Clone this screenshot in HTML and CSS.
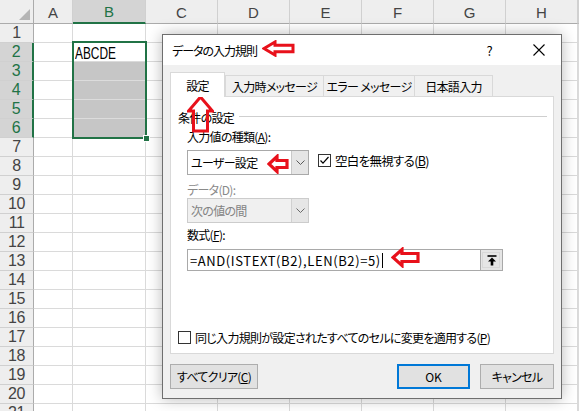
FILE: index.html
```html
<!DOCTYPE html>
<html lang="ja">
<head>
<meta charset="utf-8">
<link rel="stylesheet" href="styles.css">
</head>
<body>
<div class="app">
  <div class="sheet">
    <div class="corner"><span class="tri"></span></div>
    <div class="ch">A</div><div class="ch sel">B</div><div class="ch">C</div><div class="ch">D</div><div class="ch">E</div><div class="ch">F</div><div class="ch">G</div><div class="ch">H</div><div class="ch"></div>

    <div class="rh">1</div><div class="c"></div><div class="c"></div><div class="c"></div><div class="c"></div><div class="c"></div><div class="c"></div><div class="c"></div><div class="c"></div><div class="c"></div>
    <div class="rh sel">2</div><div class="c"></div><div class="c txt"><span>ABCDE</span></div><div class="c"></div><div class="c"></div><div class="c"></div><div class="c"></div><div class="c"></div><div class="c"></div><div class="c"></div>
    <div class="rh sel">3</div><div class="c"></div><div class="c gray"></div><div class="c"></div><div class="c"></div><div class="c"></div><div class="c"></div><div class="c"></div><div class="c"></div><div class="c"></div>
    <div class="rh sel">4</div><div class="c"></div><div class="c gray"></div><div class="c"></div><div class="c"></div><div class="c"></div><div class="c"></div><div class="c"></div><div class="c"></div><div class="c"></div>
    <div class="rh sel">5</div><div class="c"></div><div class="c gray"></div><div class="c"></div><div class="c"></div><div class="c"></div><div class="c"></div><div class="c"></div><div class="c"></div><div class="c"></div>
    <div class="rh sel">6</div><div class="c"></div><div class="c gray"></div><div class="c"></div><div class="c"></div><div class="c"></div><div class="c"></div><div class="c"></div><div class="c"></div><div class="c"></div>
    <div class="rh">7</div><div class="c"></div><div class="c"></div><div class="c"></div><div class="c"></div><div class="c"></div><div class="c"></div><div class="c"></div><div class="c"></div><div class="c"></div>
    <div class="rh">8</div><div class="c"></div><div class="c"></div><div class="c"></div><div class="c"></div><div class="c"></div><div class="c"></div><div class="c"></div><div class="c"></div><div class="c"></div>
    <div class="rh">9</div><div class="c"></div><div class="c"></div><div class="c"></div><div class="c"></div><div class="c"></div><div class="c"></div><div class="c"></div><div class="c"></div><div class="c"></div>
    <div class="rh">10</div><div class="c"></div><div class="c"></div><div class="c"></div><div class="c"></div><div class="c"></div><div class="c"></div><div class="c"></div><div class="c"></div><div class="c"></div>
    <div class="rh">11</div><div class="c"></div><div class="c"></div><div class="c"></div><div class="c"></div><div class="c"></div><div class="c"></div><div class="c"></div><div class="c"></div><div class="c"></div>
    <div class="rh">12</div><div class="c"></div><div class="c"></div><div class="c"></div><div class="c"></div><div class="c"></div><div class="c"></div><div class="c"></div><div class="c"></div><div class="c"></div>
    <div class="rh">13</div><div class="c"></div><div class="c"></div><div class="c"></div><div class="c"></div><div class="c"></div><div class="c"></div><div class="c"></div><div class="c"></div><div class="c"></div>
    <div class="rh">14</div><div class="c"></div><div class="c"></div><div class="c"></div><div class="c"></div><div class="c"></div><div class="c"></div><div class="c"></div><div class="c"></div><div class="c"></div>
    <div class="rh">15</div><div class="c"></div><div class="c"></div><div class="c"></div><div class="c"></div><div class="c"></div><div class="c"></div><div class="c"></div><div class="c"></div><div class="c"></div>
    <div class="rh">16</div><div class="c"></div><div class="c"></div><div class="c"></div><div class="c"></div><div class="c"></div><div class="c"></div><div class="c"></div><div class="c"></div><div class="c"></div>
    <div class="rh">17</div><div class="c"></div><div class="c"></div><div class="c"></div><div class="c"></div><div class="c"></div><div class="c"></div><div class="c"></div><div class="c"></div><div class="c"></div>
    <div class="rh">18</div><div class="c"></div><div class="c"></div><div class="c"></div><div class="c"></div><div class="c"></div><div class="c"></div><div class="c"></div><div class="c"></div><div class="c"></div>
    <div class="rh">19</div><div class="c"></div><div class="c"></div><div class="c"></div><div class="c"></div><div class="c"></div><div class="c"></div><div class="c"></div><div class="c"></div><div class="c"></div>
    <div class="rh">20</div><div class="c"></div><div class="c"></div><div class="c"></div><div class="c"></div><div class="c"></div><div class="c"></div><div class="c"></div><div class="c"></div><div class="c"></div>
    <div class="rh">21</div><div class="c"></div><div class="c"></div><div class="c"></div><div class="c"></div><div class="c"></div><div class="c"></div><div class="c"></div><div class="c"></div><div class="c"></div>
  </div>

  <div class="selbox"><span class="handle"></span></div>

  <div class="dialog">
    <div class="titlebar">
      <span class="title">データの入力規則</span>
      <span class="help">?</span>
      <svg class="close" width="12" height="12" viewBox="0 0 12 12"><path d="M0.5 0.5L11.5 11.5M11.5 0.5L0.5 11.5" stroke="#000" stroke-width="1.1" fill="none"/></svg>
    </div>
    <div class="dbody">
      <div class="tabs">
        <div class="tab active">設定</div>
        <div class="tab t2">入力時メッセージ</div>
        <div class="tab t3">エラー メッセージ</div>
        <div class="tab t4">日本語入力</div>
      </div>
      <div class="panel">
        <div class="group"><span>条件の設定</span><i class="gline"></i></div>
        <div class="inner">
          <div class="lbl l1">入力値の種類(<u>A</u>):</div>
          <div class="row1">
            <div class="combo"><span class="val">ユーザー設定</span><span class="dd"><svg width="9" height="5" viewBox="0 0 9 5"><path d="M0.5 0.5L4.5 4.5L8.5 0.5" stroke="#5a5a5a" fill="none"/></svg></span></div>
            <div class="chk c1"><span class="box"><svg width="11" height="11" viewBox="0 0 11 11"><path d="M1.5 5.5L4 8.2L9.5 2" stroke="#000" stroke-width="1.2" fill="none"/></svg></span><span>空白を無視する(<u>B</u>)</span></div>
          </div>
          <div class="lbl dis l2">データ(D):</div>
          <div class="combo disabled"><span class="val">次の値の間</span><span class="dd"><svg width="9" height="5" viewBox="0 0 9 5"><path d="M0.5 0.5L4.5 4.5L8.5 0.5" stroke="#6a6a6a" fill="none"/></svg></span></div>
          <div class="lbl l3">数式(<u>F</u>):</div>
          <div class="formula"><span class="ftext">=AND(ISTEXT(B2),LEN(B2)=5)</span><i class="caret"></i><span class="fbtn"><svg width="10" height="11" viewBox="0 0 10 11"><path d="M0.5 1H9.5" stroke="#000" stroke-width="1.6"/><path d="M5 2.5L9 6.5H6.3V10.5H3.7V6.5H1Z" fill="#000"/></svg></span></div>
        </div>
        <div class="chk apply"><span class="box"></span><span>同じ入力規則が設定されたすべてのセルに変更を適用する(<u>P</u>)</span></div>
      </div>
      <div class="buttons">
        <div class="btn clear">すべてクリア(<u>C</u>)</div>
        <div class="btn ok">OK</div>
        <div class="btn cancel">キャンセル</div>
      </div>
    </div>
  </div>

  <svg class="arrow a-title" width="33" height="17" viewBox="0 0 33 17"><path d="M2 8.5L13 2V5.2H31V11.8H13V15Z" fill="none" stroke="#e8111b" stroke-width="3" stroke-linejoin="miter"/></svg>
  <svg class="arrow a-tab" width="27" height="38" viewBox="0 0 27 38"><path d="M13.5 2L25.5 16H20.5V36H6.5V16H1.5Z" fill="none" stroke="#e8111b" stroke-width="3" stroke-linejoin="miter"/></svg>
  <svg class="arrow a-combo" width="22" height="20" viewBox="0 0 22 20"><path d="M2 10L10 2.5V6.5H20V13.5H10V17.5Z" fill="none" stroke="#e8111b" stroke-width="3.2" stroke-linejoin="miter"/></svg>
  <svg class="arrow a-formula" width="29" height="21" viewBox="0 0 29 21"><path d="M2 10.5L11 2.5V6.5H27V14.5H11V18.5Z" fill="none" stroke="#e8111b" stroke-width="3.2" stroke-linejoin="miter"/></svg>
</div>
</body>
</html>
```

FILE: styles.css
```css
* { box-sizing: border-box; }
body { margin: 0; background: #fff; overflow: hidden; }
.app {
  position: relative;
  width: 579px;
  height: 411px;
  overflow: hidden;
  font-family: "Noto Sans CJK JP", sans-serif;
  font-feature-settings: "palt" 1;
}

/* ---------- spreadsheet ---------- */
.sheet {
  display: grid;
  grid-template-columns: 34px 39px 73px repeat(6, 72px) 1fr;
  grid-template-rows: 24px;
  grid-auto-rows: 19px;
  font-family: "Liberation Sans", sans-serif;
  color: #444;
}
.corner {
  position: relative;
  background: #eeeeee;
  border-right: 1px solid #ababab;
  border-bottom: 1px solid #ababab;
}
.tri {
  position: absolute;
  right: 3px;
  bottom: 3px;
  width: 0;
  height: 0;
  border-left: 11px solid transparent;
  border-bottom: 11px solid #b5b5b5;
}
.ch {
  background: #eeeeee;
  border-right: 1px solid #d0d0d0;
  border-bottom: 1px solid #ababab;
  display: flex;
  align-items: center;
  justify-content: center;
  font-size: 15px;
  padding-top: 1px;
}
.ch.sel {
  background: #d4d4d4;
  color: #217346;
  border-bottom: 2px solid #217346;
}
.rh {
  background: #eeeeee;
  border-right: 1px solid #ababab;
  border-bottom: 1px solid #d0d0d0;
  display: flex;
  align-items: center;
  justify-content: center;
  font-size: 16px;
  letter-spacing: -0.5px;
}
.rh.sel {
  background: #d4d4d4;
  color: #217346;
  border-right: 2px solid #217346;
}
.c {
  border-right: 1px solid #dadada;
  border-bottom: 1px solid #dadada;
}
.c.gray { background: #c6c6c6; border-color: #dcdcdc; }
.c.txt {
  font-size: 17px;
  line-height: 18px;
  color: #000;
  padding: 2px 0 0 2px;
  white-space: nowrap;
}
.c.txt span {
  display: inline-block;
  transform: scaleX(0.7);
  transform-origin: left center;
}

.selbox {
  position: absolute;
  left: 72px;
  top: 41px;
  width: 75px;
  height: 98px;
  border: 2px solid #217346;
}
.handle {
  position: absolute;
  right: -5px;
  bottom: -5px;
  width: 7px;
  height: 7px;
  background: #217346;
  border: 1px solid #fff;
}

/* ---------- dialog ---------- */
.dialog {
  position: absolute;
  left: 162px;
  top: 34px;
  width: 400px;
  height: 365px;
  background: #f0f0f0;
  border: 1px solid #6e6e6e;
  box-shadow: 0 0 14px rgba(0, 0, 0, 0.28);
  font-size: 12px;
  letter-spacing: -0.7px;
  color: #000;
  display: flex;
  flex-direction: column;
  white-space: nowrap;
}
.titlebar {
  height: 30px;
  background: #fff;
  display: flex;
  align-items: center;
  padding-left: 9px;
}
.title { font-size: 12px; flex: 1; letter-spacing: -1px; }
.help { font-size: 13px; margin-right: 41px; }
.close { margin-right: 16px; }

.dbody {
  padding: 7px 7px 0 7px;
  display: flex;
  flex-direction: column;
}
.tabs {
  display: flex;
  align-items: flex-end;
  height: 24px;
  position: relative;
  z-index: 1;
}
.tab {
  height: 21px;
  border: 1px solid #d9d9d9;
  border-bottom: none;
  background: #f0f0f0;
  display: flex;
  align-items: center;
  justify-content: center;
  margin-left: -1px;
  padding-top: 1px;
}
.tab.active {
  height: 25px;
  margin-left: 0;
  margin-bottom: -1px;
  width: 55px;
  background: #fff;
  padding-top: 0;
}
.tab.t2 { width: 99px; margin-left: 0; }
.tab.t3 { width: 92px; }
.tab.t4 { width: 79px; }

.panel {
  width: 384px;
  height: 258px;
  background: #fff;
  border: 1px solid #d9d9d9;
  padding: 12px 0 0 7px;
  display: flex;
  flex-direction: column;
}
.group {
  display: flex;
  align-items: center;
  height: 16px;
  padding-right: 6px;
}
.gline {
  display: block;
  flex: 1;
  height: 1px;
  background: #cfcfcf;
  margin-left: 5px;
  margin-top: -1px;
}
.inner {
  padding-left: 9px;
  display: flex;
  flex-direction: column;
}
.lbl { height: 16px; line-height: 16px; }
.l1 { margin-top: 4px; }
.l2 { margin-top: 7px; }
.l3 { margin-top: 4px; }
.dis { color: #8a8a8a; }
.row1 {
  display: flex;
  align-items: flex-start;
  margin-top: 5px;
}
.combo {
  width: 122px;
  height: 25px;
  border: 1px solid #a9a9a9;
  background: #fff;
  display: flex;
  align-items: stretch;
}
.combo .val {
  flex: 1;
  display: flex;
  align-items: center;
  padding-left: 3px;
  font-size: 12px;
}
.combo .dd {
  width: 17px;
  background: #e5e5e5;
  border-left: 1px solid #c8c8c8;
  display: flex;
  align-items: center;
  justify-content: center;
}
.combo.disabled {
  background: #f0f0f0;
  border-color: #cccccc;
  color: #838383;
}
.combo.disabled .dd { background: #e6e6e6; border-left-color: #d0d0d0; }

.chk {
  display: flex;
  align-items: center;
  height: 16px;
}
.chk .box {
  width: 13px;
  height: 13px;
  border: 1px solid #333;
  background: #fff;
  display: flex;
  align-items: center;
  justify-content: center;
  margin-right: 4px;
  flex: none;
}
.c1 { margin-left: 9px; margin-top: 2px; font-size: 12.5px; }
.apply { margin-top: 58px; margin-left: 0; }

.formula {
  width: 316px;
  height: 22px;
  margin-top: 6px;
  border: 1px solid #a9a9a9;
  background: #fff;
  display: flex;
  align-items: center;
}
.ftext {
  padding-left: 2px;
  font-size: 13px;
  letter-spacing: 0.6px;
}
.caret {
  width: 1px;
  height: 15px;
  background: #000;
  margin-left: 1px;
}
.fbtn {
  margin-left: auto;
  width: 22px;
  height: 20px;
  background: #e5e5e5;
  border-left: 1px solid #a9a9a9;
  display: flex;
  align-items: center;
  justify-content: center;
  outline: 1px solid #d8d8d8;
  outline-offset: -3px;
}

.buttons {
  display: flex;
  margin-top: 10px;
  gap: 10px;
}
.btn {
  height: 25px;
  border: 1px solid #adadad;
  background: #e1e1e1;
  display: flex;
  align-items: center;
  justify-content: center;
}
.btn.clear { width: 88px; margin-right: auto; }
.btn.ok { width: 73px; border: 2px solid #0078d7; letter-spacing: 0; }
.btn.cancel { width: 74px; }

/* ---------- annotation arrows ---------- */
.arrow { position: absolute; }
.a-title { left: 262px; top: 40px; }
.a-tab { left: 187px; top: 95px; }
.a-combo { left: 267px; top: 154px; }
.a-formula { left: 391px; top: 247px; }
```
